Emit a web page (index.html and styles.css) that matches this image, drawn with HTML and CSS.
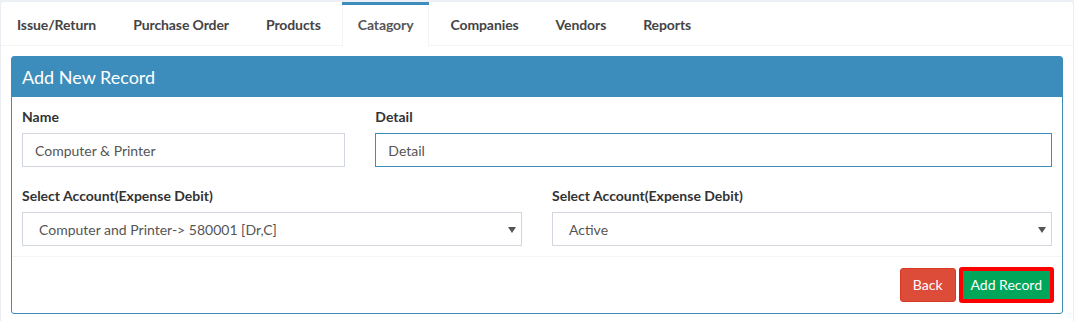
FILE: index.html
```html
<!DOCTYPE html>
<html lang="en">

<head>
    <meta charset="UTF-8">
    <meta name="viewport" content="width=device-width, initial-scale=1.0">
    <title>Catagory - Add New Record</title>
    <link rel="stylesheet" href="styles.css">
</head>

<body>
    <div class="tabs-card">
        <ul class="tabs">
            <li><a href="#">Issue/Return</a></li>
            <li><a href="#">Purchase Order</a></li>
            <li><a href="#">Products</a></li>
            <li class="active"><a href="#">Catagory</a></li>
            <li><a href="#">Companies</a></li>
            <li><a href="#">Vendors</a></li>
            <li><a href="#">Reports</a></li>
        </ul>
        <div class="tab-content">
            <div class="box">
                <div class="box-header">
                    <h3 class="box-title">Add New Record</h3>
                </div>
                <form class="box-body" id="recordForm">
                    <div class="row row-first">
                        <div class="col col-4">
                            <label for="name">Name</label>
                            <input type="text" class="form-control" id="name" name="name" value="Computer &amp; Printer">
                        </div>
                        <div class="col col-8">
                            <label for="detail">Detail</label>
                            <input type="text" class="form-control focused" id="detail" name="detail" value="Detail" autofocus>
                        </div>
                    </div>
                    <div class="row">
                        <div class="col col-6">
                            <label for="account">Select Account(Expense Debit)</label>
                            <div class="select-wrap">
                                <select class="form-control" id="account" name="account">
                                    <option>Computer and Printer-&gt; 580001 [Dr,C]</option>
                                </select>
                            </div>
                        </div>
                        <div class="col col-6">
                            <label for="status">Select Account(Expense Debit)</label>
                            <div class="select-wrap">
                                <select class="form-control" id="status" name="status">
                                    <option>Active</option>
                                    <option>Inactive</option>
                                </select>
                            </div>
                        </div>
                    </div>
                </form>
                <div class="box-footer">
                    <button type="button" class="btn btn-back">Back</button>
                    <button type="submit" form="recordForm" class="btn btn-add">Add Record</button>
                </div>
            </div>
        </div>
    </div>
    <script>
        var detail = document.getElementById('detail');
        detail.focus();
        detail.setSelectionRange(detail.value.length, detail.value.length);
    </script>
</body>

</html>
```

FILE: styles.css
```css
* {
    box-sizing: border-box;
}

body {
    font-family: Lato, "Open Sans", sans-serif;
    font-size: 14px;
    line-height: 20px;
    color: #333;
    background-color: #ecf0f5;
    margin: 0;
    padding: 2px 1px 0 1px;
}

.tabs-card {
    background-color: #fff;
    border-radius: 3px;
    box-shadow: 0 1px 1px rgba(0, 0, 0, 0.1);
    min-height: 319px;
}

.tabs {
    list-style: none;
    margin: 0;
    padding: 0;
    display: flex;
    gap: 5px;
    border-bottom: 1px solid #f4f4f4;
}

.tabs li {
    border-top: 3px solid transparent;
    margin-bottom: -1px;
}

.tabs li a {
    display: block;
    padding: 10px 15px;
    border-left: 1px solid transparent;
    border-right: 1px solid transparent;
    color: #444;
    font-weight: 700;
    letter-spacing: -0.1px;
    text-decoration: none;
}

.tabs li.active {
    border-top-color: #3c8dbc;
}

.tabs li.active a {
    background-color: #fff;
    color: #555;
    border-left-color: #f4f4f4;
    border-right-color: #f4f4f4;
    padding-bottom: 11px;
}

.tab-content {
    padding: 10px;
}

.box {
    border: 1px solid #3c8dbc;
    border-radius: 3px;
    background-color: #fff;
}

.box-header {
    background-color: #3c8dbc;
    color: #fff;
    padding: 10px;
}

.box-title {
    margin: 0;
    font-size: 18px;
    font-weight: 400;
    line-height: 20px;
}

.box-body {
    padding: 10px;
}

.row {
    display: flex;
    margin: 0 -15px;
}

.row-first {
    margin-bottom: 19px;
}

.col {
    padding: 0 15px;
}

.col-4 {
    width: 33.3333%;
}

.col-8 {
    width: 66.6667%;
}

.col-6 {
    width: 50%;
}

label {
    display: block;
    font-weight: 700;
    margin-bottom: 6px;
}

.form-control {
    display: block;
    width: 100%;
    height: 34px;
    padding: 6px 12px;
    font-family: inherit;
    font-size: 14px;
    color: #555;
    background-color: #fff;
    border: 1px solid #d2d6de;
    border-radius: 0;
    outline: none;
}

.form-control.focused,
.form-control:focus {
    border-color: #3c8dbc;
}

.select-wrap {
    position: relative;
}

.select-wrap select {
    appearance: none;
    -webkit-appearance: none;
    padding-left: 16px;
}

.select-wrap::after {
    content: "";
    position: absolute;
    right: 6px;
    top: 15px;
    border-left: 4px solid transparent;
    border-right: 4px solid transparent;
    border-top: 6px solid #555;
    pointer-events: none;
}

.box-footer {
    border-top: 1px solid #f4f4f4;
    padding: 10px;
    display: flex;
    justify-content: flex-end;
    align-items: center;
    gap: 3px;
}

.btn {
    font-family: inherit;
    font-size: 14px;
    line-height: 20px;
    color: #fff;
    border-radius: 3px;
    cursor: pointer;
}

.btn-back {
    height: 34px;
    padding: 6px 12px;
    background-color: #dd4b39;
    border: 1px solid #d73925;
}

.btn-add {
    height: 36px;
    padding: 4px 8px;
    background-color: #00a65a;
    border: 4px solid #f00;
    margin-right: -2px;
}

.btn-back:hover {
    background-color: #d73925;
}

.btn-add:hover {
    background-color: #008d4c;
}
```
